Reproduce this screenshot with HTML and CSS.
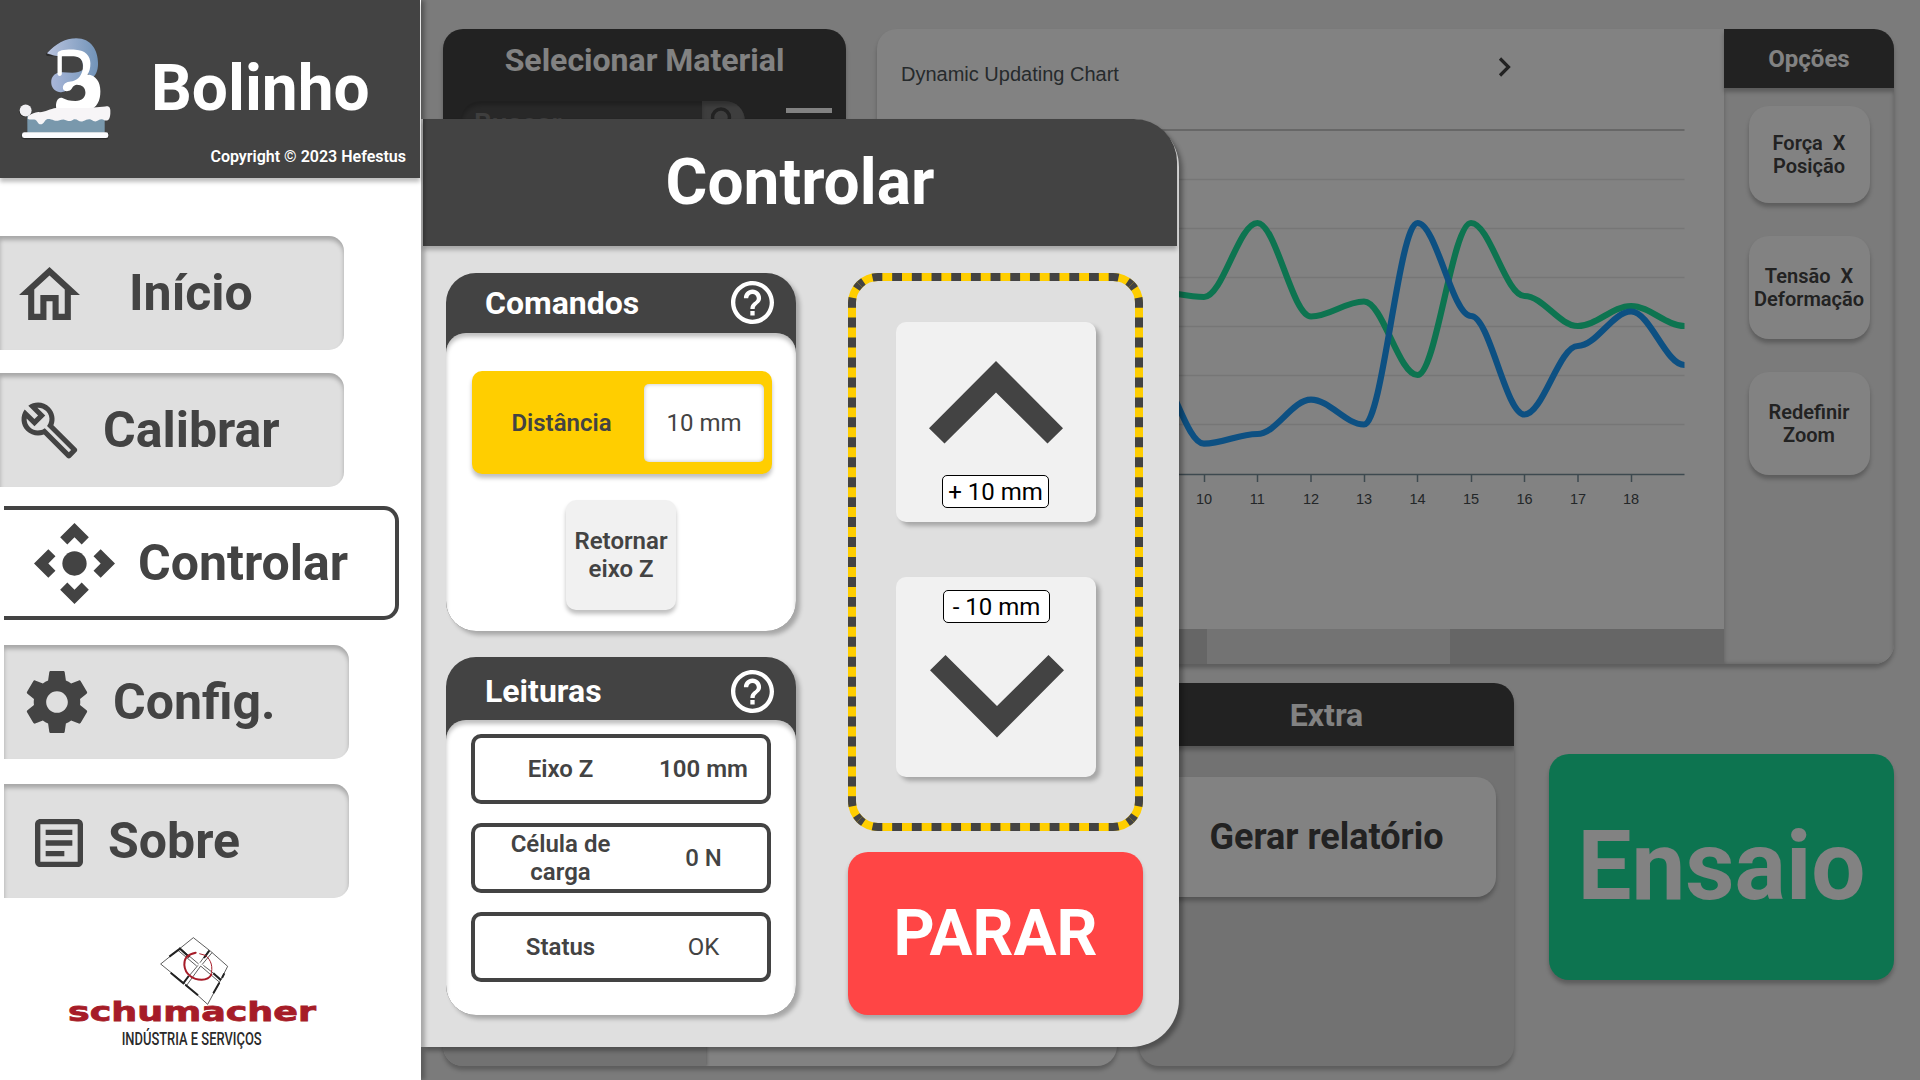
FILE: index.html
```html
<!DOCTYPE html>
<html lang="pt-BR">
<head>
<meta charset="utf-8">
<title>Bolinho</title>
<link rel="stylesheet" href="styles.css">
</head>
<body>
<div class="app">
  <aside class="sidebar">
    <header class="brand">
      <svg class="brand-logo" viewBox="55 110 280 308" width="93" height="103">
        <defs>
          <linearGradient id="swirl" x1="0" x2="1"><stop offset="0" stop-color="#b9c3de"/><stop offset="1" stop-color="#7193b8"/></linearGradient>
          <linearGradient id="blob" x1="0" x2="1"><stop offset="0" stop-color="#a9b6d8"/><stop offset="1" stop-color="#7d9cc0"/></linearGradient>
        </defs>
        <path fill="#2b2b2b" d="M139 160C165 132 195 113 228 113l-40 55-46-2zM58 330a19 19 0 0 0 20 20l8-4-4 50H70q-5 2-4 18l8 3h252l3-18z"/>
        <path fill="url(#swirl)" d="M142 158C168 130 196 113 230 113C276 113 296 150 296 188C296 212 288 228 276 232L240 190L200 168C172 168 158 164 142 158Z"/>
        <path fill="#434343" d="M188 166H226C246 168 252 184 250 200C248 216 236 220 215 217L188 212Z"/>
        <path fill="url(#blob)" d="M178 216C200 212 232 224 252 206L262 232L205 262C203 272 192 276 182 275C164 272 155 260 155 245C155 229 165 219 178 216Z"/>
        <path fill="#fff" d="M174 220V158C176 149 196 146 228 147C258 148 273 166 273 188C273 203 270 214 264 222C290 224 303 245 303 272C303 300 294 322 266 330C230 338 190 334 171 328C166 306 174 290 187 292C198 298 212 302 228 302C248 301 258 290 258 277C258 262 248 253 232 253C221 254 220 262 214 268C204 276 190 272 190 262C191 246 206 243 219 242C236 238 250 222 251 196C251 178 240 167 222 167H187V220C186 228 175 228 174 220Z"/>
        <path fill="#7998ac" d="M83 345H316V397H83Z"/>
        <path fill="#f7f5f7" d="M86 346C98 340 105 336 116 335C136 337 150 325 170 323H265L318 318C332 316 334 324 333 340C332 356 326 363 316 360C300 350 296 368 282 362C270 352 262 358 252 362C238 368 236 354 222 357C210 366 204 360 192 357C180 357 174 364 164 360C150 355 142 353 136 362C128 376 118 374 113 364C106 352 94 362 84 354Z"/>
        <circle cx="78" cy="330" r="18" fill="#f1f0f3"/>
        <rect x="67" y="396" width="260" height="17" rx="7" fill="#fbfbfd"/>
      </svg>
      <h1 class="brand-name">Bolinho</h1>
      <p class="copyright">Copyright © 2023 Hefestus</p>
    </header>
    <nav class="menu">
      <a class="item item-home">
        <svg viewBox="2 3 20 17" width="61" height="53" preserveAspectRatio="none"><path d="M12 5.69l5 4.5V18h-2v-6H9v6H7v-7.81l5-4.5M12 3L2 12h3v8h6v-6h2v6h6v-8h3L12 3z"/></svg>
        <span>Início</span>
      </a>
      <a class="item item-calibrate">
        <svg viewBox="0 0 24 24" width="61" height="61"><path d="M22.61 18.99l-9.08-9.08c.93-2.34.45-5.1-1.44-7C9.79.61 6.21.4 3.66 2.26L7.5 6.11 6.08 7.52 2.25 3.69C.39 6.23.6 9.82 2.9 12.11c1.86 1.86 4.57 2.35 6.89 1.48l9.11 9.11c.39.39 1.02.39 1.41 0l2.3-2.3c.4-.38.4-1.01 0-1.41zm-3 1.6l-9.46-9.46c-.61.45-1.29.72-2 .82-1.36.2-2.79-.21-3.83-1.25C3.37 9.76 2.93 8.5 3 7.26l3.09 3.09 4.24-4.24-3.09-3.09c1.24-.07 2.49.37 3.44 1.31 1.08 1.08 1.49 2.57 1.24 3.96-.12.71-.42 1.37-.88 1.96l9.45 9.45-.88.89z"/></svg>
        <span>Calibrar</span>
      </a>
      <a class="item item-control active">
        <svg viewBox="2 2 20 20" width="81" height="81"><path d="M15.54 5.54L13.77 7.3 12 5.54 10.23 7.3 8.46 5.54 12 2zm2.92 10l-1.76-1.77L18.46 12l-1.76-1.77 1.76-1.77L22 12zm-10 2.92l1.77-1.76L12 18.46l1.77-1.76 1.77 1.76L12 22zm-2.92-10l1.76 1.77L5.54 12l1.76 1.77-1.76 1.77L2 12z"/><circle cx="12" cy="12" r="3"/></svg>
        <span>Controlar</span>
      </a>
      <a class="item item-config">
        <svg viewBox="2 2 20 20" width="62" height="62"><path d="M19.43 12.98c.04-.32.07-.64.07-.98s-.03-.66-.07-.98l2.11-1.65c.19-.15.24-.42.12-.64l-2-3.46c-.12-.22-.39-.3-.61-.22l-2.49 1c-.52-.4-1.08-.73-1.69-.98l-.38-2.65C14.46 2.18 14.25 2 14 2h-4c-.25 0-.46.18-.49.42l-.38 2.65c-.61.25-1.17.59-1.69.98l-2.49-1c-.23-.09-.49 0-.61.22l-2 3.46c-.13.22-.07.49.12.64l2.11 1.65c-.04.32-.07.65-.07.98s.03.66.07.98l-2.11 1.65c-.19.15-.24.42-.12.64l2 3.46c.12.22.39.3.61.22l2.49-1c.52.4 1.08.73 1.69.98l.38 2.65c.03.24.24.42.49.42h4c.25 0 .46-.18.49-.42l.38-2.65c.61-.25 1.17-.59 1.69-.98l2.49 1c.23.09.49 0 .61-.22l2-3.46c.12-.22.07-.49-.12-.64l-2.11-1.65zM12 15.5c-1.93 0-3.5-1.57-3.5-3.5s1.57-3.5 3.5-3.5 3.5 1.57 3.5 3.5-1.57 3.5-3.5 3.5z"/></svg>
        <span>Config.</span>
      </a>
      <a class="item item-about">
        <svg viewBox="3 3 18 18" width="48" height="48"><path d="M19 5v14H5V5h14m0-2H5c-1.1 0-2 .9-2 2v14c0 1.1.9 2 2 2h14c1.1 0 2-.9 2-2V5c0-1.1-.9-2-2-2zm-5 14H7v-2h7v2zm3-4H7v-2h10v2zm0-4H7V7h10v2z"/></svg>
        <span>Sobre</span>
      </a>
    </nav>
    <svg class="sponsor" viewBox="87 100 738 360" width="246" height="120">
      <g fill="none" stroke="#222" stroke-width="2.2">
        <path d="M460 111L362 190L433 248L503 311L540 242L563 197L512 152Z"/>
        <path d="M418 141L476 190M414 149L470 196M506 150L480 186M516 156L486 192M482 196L440 254M474 194L430 246M482 196L540 246M490 194L544 236"/>
      </g>
      <g fill="none" stroke="#222" stroke-width="6">
        <path d="M388 168L420 144L448 170M508 150L492 172M392 216L430 248L446 226M436 252L474 284M543 239L520 218M538 246L520 278M546 232L553 218"/>
      </g>
      <path fill="none" stroke="#a61c28" stroke-width="6" stroke-linecap="round" d="M467 156C444 160 432 174 433 193C435 222 460 237 485 237C500 237 510 230 514 222"/>
      <path fill="none" stroke="#a61c28" stroke-width="3" d="M512 224C520 200 514 178 496 164L478 159"/>
      <text class="sponsor-name" x="84" y="361" textLength="744" lengthAdjust="spacingAndGlyphs">schumacher</text>
      <text class="sponsor-tag" x="245" y="434" textLength="420" lengthAdjust="spacingAndGlyphs">INDÚSTRIA E SERVIÇOS</text>
    </svg>
  </aside>

  <main class="workspace">
    <div class="row row-top">
      <section class="card material">
        <h2>Selecionar Material</h2>
        <div class="search-row">
          <div class="search">
            <span class="search-text">Buscar</span>
            <span class="search-btn"><svg viewBox="0 0 24 30" width="24" height="30" fill="none" stroke="#434343" stroke-width="3.5"><circle cx="12" cy="10.500" r="8.500"/><path d="M17 17l6 8"/></svg></span>
          </div>
          <div class="burger"><i></i><i></i><i></i></div>
        </div>
      </section>
      <section class="card chart">
        <div class="chart-area">
          <svg viewBox="877 29 847 600" width="847" height="600">
            <text class="chart-title" x="901" y="81">Dynamic Updating Chart</text>
            <path d="M1500 58.500L1508.500 67L1500 75.500" fill="none" stroke="#434343" stroke-width="3.2"/>
            <path class="frame" d="M901 130H1684.500"/>
            <path class="grid" d="M901 179.500H1684.500M901 228.500H1684.500M901 277.500H1684.500M901 326.500H1684.500M901 375.500H1684.500M901 424.500H1684.500"/>
            <path class="axis" d="M901 474.500H1684.500M1204.500 474V482M1257.500 474V482M1311 474V482M1364.500 474V482M1417.500 474V482M1471.500 474V482M1524.500 474V482M1578 474V482M1631.500 474V482"/>
            <path class="line-green" d="M1151 291C1169.700 291 1185.500 297 1204 297C1222.700 297 1238.700 223 1257.400 223C1276 223 1292.300 316.500 1311 316.500C1329.700 316.500 1345.300 301.500 1364 301.500C1382.700 301.500 1398.800 375 1417.500 375C1436.200 375 1452.300 223 1471 223C1489.700 223 1505.700 296 1524.400 296C1543 296 1559.100 326 1577.800 326C1596.500 326 1612.400 306 1631.100 306C1649.800 306 1665.800 326 1684.500 326"/>
            <path class="line-blue" d="M1151 366C1169.700 366 1185.500 443.700 1204 443.700C1222.700 443.700 1238.700 434 1257.400 434C1276 434 1292.300 399.700 1311 399.700C1329.700 399.700 1345.300 424.500 1364 424.500C1382.700 424.500 1398.800 223 1417.500 223C1436.200 223 1452.300 316 1471 316C1489.700 316 1505.700 414.500 1524.400 414.500C1543 414.500 1559.100 346 1577.800 346C1596.500 346 1612.400 311.500 1631.100 311.500C1649.800 311.500 1665.800 365 1684.500 365"/>
            <g class="ticks">
              <text x="1204" y="504">10</text><text x="1257.400" y="504">11</text><text x="1311" y="504">12</text><text x="1364" y="504">13</text><text x="1417.500" y="504">14</text><text x="1471" y="504">15</text><text x="1524.500" y="504">16</text><text x="1578" y="504">17</text><text x="1631" y="504">18</text>
            </g>
          </svg>
          <div class="scrollbar"><div class="thumb"></div></div>
        </div>
        <div class="options">
          <h3>Opções</h3>
          <div class="options-list">
            <button class="option option-force">Força&nbsp; X<br>Posição</button>
            <button class="option">Tensão&nbsp; X<br>Deformação</button>
            <button class="option">Redefinir<br>Zoom</button>
          </div>
        </div>
      </section>
    </div>
    <div class="row row-bottom">
      <section class="card parameters"><div class="parameters-tabs"></div></section>
      <section class="card extra">
        <h2>Extra</h2>
        <button class="report">Gerar relatório</button>
      </section>
      <button class="run">Ensaio</button>
    </div>
    <div class="overlay"></div>

    <section class="modal">
      <h2 class="modal-title">Controlar</h2>
      <div class="modal-body">
        <div class="col-left">
          <section class="panel">
            <header class="panel-head">
              <h3>Comandos</h3>
              <svg viewBox="2 2 20 20" width="43" height="43"><path d="M11 18h2v-2h-2v2zm1-16C6.480 2 2 6.480 2 12s4.480 10 10 10 10-4.480 10-10S17.520 2 12 2zm0 18c-4.410 0-8-3.590-8-8s3.590-8 8-8 8 3.590 8 8-3.590 8-8 8zm0-14c-2.210 0-4 1.790-4 4h2c0-1.100.9-2 2-2s2 .9 2 2c0 2-3 1.750-3 5h2c0-2.250 3-2.500 3-5 0-2.210-1.790-4-4-4z"/></svg>
            </header>
            <div class="panel-body commands">
              <div class="distance"><b>Distância</b><span>10 mm</span></div>
              <button class="return">Retornar<br>eixo Z</button>
            </div>
          </section>
          <section class="panel">
            <header class="panel-head panel-head-tall">
              <h3>Leituras</h3>
              <svg viewBox="2 2 20 20" width="43" height="43"><path d="M11 18h2v-2h-2v2zm1-16C6.480 2 2 6.480 2 12s4.480 10 10 10 10-4.480 10-10S17.520 2 12 2zm0 18c-4.410 0-8-3.590-8-8s3.590-8 8-8 8 3.590 8 8-3.590 8-8 8zm0-14c-2.210 0-4 1.790-4 4h2c0-1.100.9-2 2-2s2 .9 2 2c0 2-3 1.750-3 5h2c0-2.250 3-2.500 3-5 0-2.210-1.790-4-4-4z"/></svg>
            </header>
            <div class="panel-body readings">
              <div class="reading"><b>Eixo Z</b><b>100 mm</b></div>
              <div class="reading"><b>Célula de<br>carga</b><span class="medium">0 N</span></div>
              <div class="reading"><b>Status</b><span>OK</span></div>
            </div>
          </section>
        </div>
        <div class="col-right">
          <div class="jog">
            <svg class="hazard" viewBox="0 0 295 558" width="295" height="558" fill="none" stroke-width="8">
              <rect x="4" y="4" width="287" height="550" rx="26" stroke="#ffce00"/>
              <g stroke="#434343" stroke-dasharray=".5 .5" stroke-dashoffset=".25">
                <path pathLength="14" d="M11.620 11.620A26 26 0 0 1 30 4H265A26 26 0 0 1 283.380 11.620"/>
                <path pathLength="14" d="M11.620 546.380A26 26 0 0 0 30 554H265A26 26 0 0 0 283.380 546.380"/>
                <path pathLength="27" d="M11.620 11.620A26 26 0 0 0 4 30V528A26 26 0 0 0 11.620 546.380"/>
                <path pathLength="27" d="M283.380 11.620A26 26 0 0 1 291 30V528A26 26 0 0 1 283.380 546.380"/>
              </g>
            </svg>
            <button class="jog-btn jog-up">
              <svg viewBox="0 0 134 83" width="134" height="83"><path d="M0 67.300L67 0L134 67.300L118.500 82.500L67 31.500L15.500 82.500Z"/></svg>
              <span>+ 10 mm</span>
            </button>
            <button class="jog-btn jog-down">
              <span>- 10 mm</span>
              <svg viewBox="0 0 134 83" width="134" height="83"><path d="M0 15.200L67 82.500L134 15.200L118.500 0L67 51L15.500 0Z"/></svg>
            </button>
          </div>
          <button class="stop">PARAR</button>
        </div>
      </div>
    </section>
  </main>
</div>
</body>
</html>
```
FILE: styles.css
```css
* { box-sizing: border-box; margin: 0; padding: 0; }
body { font-family: Roboto, "Liberation Sans", sans-serif; color: #434343; overflow: hidden; }
button { font: inherit; color: inherit; border: 0; display: block; }

.app { display: grid; grid-template-columns: 421px 1fr; width: 1920px; height: 1080px; }

/* Sidebar */
.sidebar { position: relative; z-index: 2; background: #fff; box-shadow: 4px 0 4px rgba(0,0,0,.25); display: flex; flex-direction: column; }
.brand { width: 420px; height: 178px; background: #434343; color: #fff; box-shadow: 0 4px 4px rgba(0,0,0,.25); display: grid; grid-template-columns: 94px 1fr; grid-template-rows: 107px 19px; column-gap: 39px; padding: 37px 14px 0 18px; }
.brand-name { font-size: 64px; font-weight: 700; line-height: 75px; padding-top: 14px; white-space: nowrap; }
.copyright { grid-column: 1 / 3; font-size: 16px; font-weight: 600; line-height: 19px; text-align: right; padding-top: 3px; }
.menu { display: flex; flex-direction: column; padding-top: 58px; }
.item { width: 344px; height: 114px; background: #dfdfdf; border-radius: 0 15px 15px 0; box-shadow: inset 0 4px 4px rgba(0,0,0,.25); display: flex; align-items: center; font-size: 50px; font-weight: 700; fill: #434343; }
.item svg { flex: none; }
.item-home { padding-left: 19px; gap: 49px; }
.item-calibrate { margin-top: 23px; padding-left: 19px; gap: 23px; }
.item.active { margin: 19px 0 25px 4px; width: 395px; background: #fff; border: 4px solid #434343; border-left: 0; box-shadow: none; padding-left: 30px; gap: 23px; }
.item-config { margin-left: 4px; width: 345px; padding-left: 22px; gap: 25px; }
.item-about { margin: 25px 0 0 4px; width: 345px; padding-left: 31px; gap: 25px; }
.item-about svg { margin-top: 4px; }
.sponsor { margin: 36px 0 0 69px; overflow: visible; }
.sponsor-name { font: 700 81px "DejaVu Sans", sans-serif; fill: #a61c28; stroke: #a61c28; stroke-width: 2.5px; }
.sponsor-tag { font: 500 53px Roboto, sans-serif; fill: #2a2a2a; }

/* Workspace behind the dialog */
.workspace { position: relative; background: #f1f1f1; padding: 29px 26px 14px 22px; display: flex; flex-direction: column; gap: 19px; }
.row { display: flex; }
.row-top { height: 635px; gap: 31px; }
.row-bottom { height: 383px; }
.card { border-radius: 20px; overflow: hidden; box-shadow: 0 4px 4px rgba(0,0,0,.25); }
.material { width: 403px; background: #434343; color: #fff; }
.material h2 { font-size: 32px; font-weight: 700; line-height: 38px; text-align: center; padding-top: 12px; }
.search-row { display: flex; padding: 22px 14px 0 18px; justify-content: space-between; }
.search { width: 284px; height: 50px; border-radius: 20px; overflow: hidden; background: #505050; display: flex; box-shadow: inset 0 4px 4px rgba(0,0,0,.25); }
.search-text { flex: 1; padding: 5px 0 0 13px; font-size: 28px; line-height: 36px; font-weight: 600; color: #7a7a7a; }
.search-btn { width: 43px; background: #7a7a7a; padding: 6px 0 0 7px; box-shadow: inset 0 4px 4px rgba(0,0,0,.25); }
.burger { width: 46px; display: flex; flex-direction: column; gap: 12px; padding-top: 7px; }
.burger i { height: 5px; background: #fff; }

.chart { width: 1017px; background: #fff; display: flex; }
.chart-area { width: 847px; flex: none; }
.chart-area svg { display: block; }
.chart-title { font: 20px "Liberation Sans", sans-serif; fill: #4c5457; }
.frame { stroke: #b8b8b8; stroke-width: 1.500px; }
.grid { stroke: #e8e8e8; stroke-width: 1.500px; }
.axis { stroke: #78909c; stroke-width: 1.500px; }
.line-green, .line-blue { fill: none; stroke-width: 6.200px; }
.line-green { stroke: #1be39d; }
.line-blue { stroke: #1b9dff; }
.ticks { font: 14.500px "Liberation Sans", sans-serif; fill: #454c4f; text-anchor: middle; }
.scrollbar { height: 35px; background: #c8c8c8; padding-left: 330px; }
.thumb { width: 243px; height: 35px; background: #e2e2e2; }
.options { width: 170px; background: #f1f1f1; box-shadow: inset 0 0 4px rgba(0,0,0,.25); }
.options h3 { height: 59px; line-height: 60px; text-align: center; font-size: 24px; font-weight: 700; background: #434343; color: #fff; box-shadow: 0 4px 4px rgba(0,0,0,.25); }
.options-list { display: flex; flex-direction: column; align-items: center; gap: 33px; padding-top: 18px; }
.option { width: 121px; height: 103px; background: #fff; border-radius: 20px; font-size: 20px; font-weight: 600; line-height: 23px; box-shadow: 0 4px 4px rgba(0,0,0,.25); white-space: nowrap; }
.option-force { height: 97px; }

.parameters { width: 674px; background: #fff; }
.parameters-tabs { width: 263px; height: 100%; background: #dfdfdf; box-shadow: 1px 0 3px rgba(0,0,0,.25); }
.extra { width: 375px; margin-left: 22px; background: #dfdfdf; }
.extra h2 { height: 63px; line-height: 64px; text-align: center; font-size: 32px; font-weight: 700; background: #434343; color: #fff; box-shadow: 0 4px 4px rgba(0,0,0,.25); }
.report { width: 339px; height: 120px; margin: 31px auto 0; border-radius: 20px; background: #fff; font-size: 36px; font-weight: 700; box-shadow: 0 4px 4px rgba(0,0,0,.25); }
.run { width: 345px; height: 226px; margin: 71px 0 0 35px; border-radius: 20px; background: #1be39d; color: #fff; font-size: 96px; font-weight: 700; box-shadow: 0 4px 4px rgba(0,0,0,.25); padding-bottom: 2px; }
.overlay { position: absolute; inset: 0; background: rgba(0,0,0,.49); }

/* Dialog */
.modal { position: absolute; left: 0; top: 119px; width: 758px; height: 928px; background: #dfdfdf; border-radius: 0 48px 48px 0; box-shadow: 4px 4px 4px rgba(0,0,0,.3); }
.modal-title { width: 754px; height: 127px; margin-left: 2px; line-height: 128px; text-align: center; font-size: 64px; font-weight: 700; color: #fff; background: #434343; border-radius: 0 43px 0 0; box-shadow: 0 4px 4px rgba(0,0,0,.25); }
.modal-body { display: flex; justify-content: space-between; padding: 27px 36px 0 25px; }
.col-left { width: 350px; display: flex; flex-direction: column; gap: 26px; }
.panel { height: 358px; border-radius: 30px; overflow: hidden; background: #434343; box-shadow: 4px 4px 4px rgba(0,0,0,.25); display: flex; flex-direction: column; }
.panel-head { height: 60px; display: flex; justify-content: space-between; align-items: center; padding: 0 22px 1px 39px; color: #fff; fill: #fff; flex: none; }
.panel-head-tall { height: 63px; padding-top: 6px; }
.panel-head h3 { font-size: 32px; font-weight: 700; line-height: 38px; }
.panel-body { flex: 1; background: #fff; border-radius: 20px 20px 0 0; box-shadow: inset 0 4px 4px rgba(0,0,0,.25); font-size: 24px; line-height: 28px; }
.commands b, .readings b { font-weight: 600; }
.commands { display: flex; flex-direction: column; align-items: center; gap: 26px; padding: 38px 0 0 2px; }
.distance { width: 300px; height: 103px; background: #ffce00; border-radius: 10px; box-shadow: 0 4px 4px rgba(0,0,0,.25); display: flex; align-items: center; padding-right: 8px; text-align: center; }
.distance b { flex: 1; padding-left: 7px; }
.distance span { width: 120px; height: 78px; line-height: 78px; border-radius: 5px; background: #fff; box-shadow: inset 0 0 4px rgba(0,0,0,.25); }
.return { width: 110px; height: 110px; margin-right: 2px; border-radius: 10px; background: #f1f1f1; font-weight: 600; box-shadow: 0 4px 4px rgba(0,0,0,.25); white-space: nowrap; }
.readings { display: flex; flex-direction: column; gap: 19px; padding: 14px 25px 0; }
.reading { height: 70px; border: 4px solid #434343; border-radius: 10px; display: grid; grid-template-columns: 171px 115px; align-items: center; text-align: center; }
.medium { font-weight: 500; }

.col-right { width: 295px; display: flex; flex-direction: column; gap: 21px; }
.jog { position: relative; height: 558px; display: flex; flex-direction: column; align-items: center; gap: 55px; padding: 49px 0 0 1px; }
.hazard { position: absolute; inset: 0; }
.jog-btn { position: relative; width: 200px; height: 200px; border-radius: 10px; background: #f1f1f1; fill: #434343; box-shadow: 4px 4px 4px rgba(0,0,0,.25); display: flex; flex-direction: column; align-items: center; }
.jog-up { padding: 39px 1px 0 0; gap: 31px; }
.jog-down { padding: 13px 0 0 1px; gap: 32px; }
.jog-btn span { width: 107px; height: 33px; line-height: 32px; font-size: 24px; color: #000; background: #fff; border: 1px solid #000; border-radius: 5px; white-space: nowrap; }
.stop { height: 163px; border-radius: 20px; background: #ff4545; color: #fff; font-size: 64px; font-weight: 700; box-shadow: 0 4px 4px rgba(0,0,0,.25); }
```
